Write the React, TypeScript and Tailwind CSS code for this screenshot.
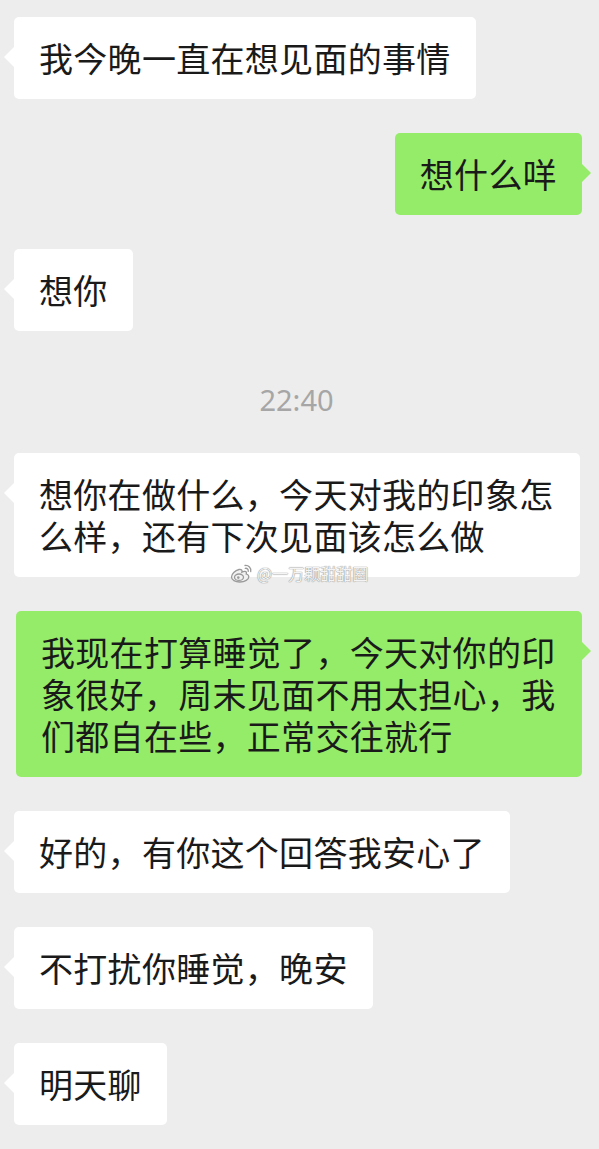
import React from "react";

const FONT = '"Noto Sans CJK SC", "Noto Sans", sans-serif';

function Bubble({
  side,
  children,
  className = "",
  overlay,
}: {
  side: "left" | "right";
  children: React.ReactNode;
  className?: string;
  overlay?: React.ReactNode;
}) {
  const green = side === "right";
  return (
    <div className={`relative flex w-full ${green ? "justify-end pr-[17px]" : "justify-start pl-[14px]"} ${className}`}>
      <div
        className={`relative max-w-[566px] rounded-[5px] px-[25px] py-[20px] text-[34px] leading-[42px] tracking-[0.3px] text-[#1a1a1a] ${
          green ? "bg-[#95ec69]" : "bg-white"
        }`}
      >
        {green ? (
          <span className="absolute right-[-9px] top-[30px] h-0 w-0 border-y-[10px] border-l-[10px] border-y-transparent border-l-[#95ec69]" />
        ) : (
          <span className="absolute left-[-10px] top-[30px] h-0 w-0 border-y-[10px] border-r-[10px] border-y-transparent border-r-white" />
        )}
        {children}
      </div>
      {overlay}
    </div>
  );
}

function WeiboLogo() {
  return (
    <svg width="23" height="19" viewBox="0 0 23 19" fill="none" stroke="#9a9a9a" strokeWidth="1.3">
      <path d="M9 5.5C5 6.5 1.5 10 1.5 13c0 3 3.8 5 8.3 5 5.2 0 9-2.6 9-5.3 0-1.8-1.6-2.4-2.6-2.7.6-1.4.3-2.6-1.3-2.7-1.3-.1-3 .8-3 .8.5-1.6-.2-3-2.9-2.6z" fill="#f2f2f2" />
      <ellipse cx="9" cy="13.2" rx="4.5" ry="3.2" fill="#f2f2f2" />
      <circle cx="8.3" cy="13.6" r="1.3" fill="#9a9a9a" stroke="none" />
      <path d="M15 1.5c3.5-.5 6.5 2.5 5.7 6" strokeLinecap="round" />
      <path d="M15.3 4.3c1.8-.3 3.3 1.1 2.9 3" strokeLinecap="round" />
    </svg>
  );
}

export default function App() {
  return (
    <div className="min-h-[1149px] w-full bg-[#ededed] pt-[17px]" style={{ fontFamily: FONT }}>
      <div className="flex flex-col">
        <Bubble side="left">我今晚一直在想见面的事情</Bubble>
        <Bubble side="right" className="mt-[34px]">想什么咩</Bubble>
        <Bubble side="left" className="mt-[34px]">想你</Bubble>
        <div className="mt-[49px] flex h-[40px] items-center justify-center pr-[6px] text-[29px] leading-[40px] text-[#a6a6a6]" style={{ fontFamily: '"Noto Sans", sans-serif' }}>
          22:40
        </div>
        <Bubble
          side="left"
          className="mt-[33px]"
          overlay={
            <div className="absolute left-[230px] top-[110px] flex items-center gap-[4px]">
              <WeiboLogo />
              <span
                className="text-[16px] leading-[20px] text-[#f4f4f4]"
                style={{ textShadow: "0 0 1px #8a8a8a, 0 0 1px #8a8a8a" }}
              >
                @一万颗甜甜圈
              </span>
            </div>
          }
        >
          想你在做什么，今天对我的印象怎么样，还有下次见面该怎么做
        </Bubble>
        <Bubble side="right" className="mt-[34px]">
          我现在打算睡觉了，今天对你的印象很好，周末见面不用太担心，我们都自在些，正常交往就行
        </Bubble>
        <Bubble side="left" className="mt-[34px]">好的，有你这个回答我安心了</Bubble>
        <Bubble side="left" className="mt-[34px]">不打扰你睡觉，晚安</Bubble>
        <Bubble side="left" className="mt-[34px]">明天聊</Bubble>
      </div>
    </div>
  );
}
